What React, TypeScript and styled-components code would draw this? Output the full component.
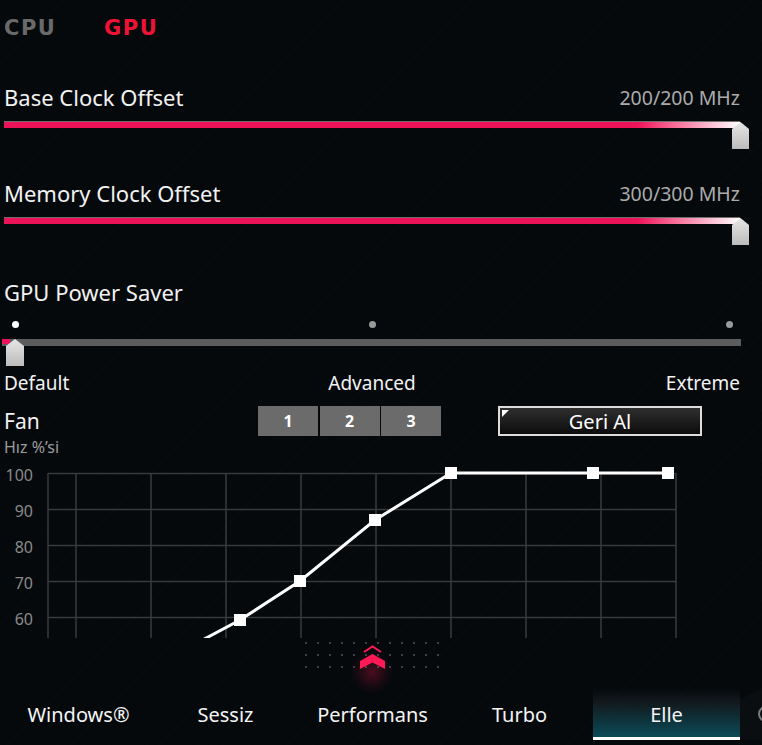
import * as React from 'react'
import styled, { createGlobalStyle } from 'styled-components'

const GlobalStyle = createGlobalStyle`
  html, body {
    margin: 0;
    padding: 0;
    background: #05090c;
  }
  * {
    box-sizing: border-box;
  }
`

const Screen = styled.div`
  width: 762px;
  height: 745px;
  overflow: hidden;
  display: flex;
  flex-direction: column;
  font-family: 'Noto Sans', 'Open Sans', sans-serif;
  color: #f2f2f2;
  background-color: #05090c;
  background-image: repeating-linear-gradient(
    135deg,
    rgba(255, 255, 255, 0.008) 0 1px,
    transparent 1px 9px
  );
`

const Content = styled.div`
  padding: 0 22px 0 4px;
  display: flex;
  flex-direction: column;
`

// Top CPU / GPU switch
const Header = styled.div`
  height: 56px;
  padding-top: 18px;
  display: flex;
`

const HeaderTab = styled.div<{ active?: boolean }>`
  width: 100px;
  font-family: 'DejaVu Sans', 'Liberation Sans', sans-serif;
  font-weight: bold;
  font-size: 21px;
  line-height: 20px;
  letter-spacing: 1.5px;
  color: ${(p) => (p.active ? '#ee1236' : '#6a6a6a')};
`

const LabelRow = styled.div<{ gap?: number }>`
  margin-top: ${(p) => p.gap ?? 0}px;
  height: 30px;
  display: flex;
  align-items: center;
  justify-content: space-between;
`

const Label = styled.span`
  font-size: 22px;
  line-height: 30px;
`

const Value = styled.span`
  font-size: 19.5px;
  color: #ababab;
`

// Clock offset slider
const SliderBox = styled.div`
  position: relative;
  height: 66px;
`

const Track = styled.div`
  margin-top: 10px;
  height: 6px;
  box-shadow: 0 -1px 0 #6e6e6e;
  background: linear-gradient(90deg, #ec135a 0%, #ec135a 86%, #f86a98 91%, #ffffff 100%);
`

const Thumb = styled.div`
  position: absolute;
  width: 17px;
  height: 27px;
  clip-path: polygon(50% 0, 100% 26%, 100% 100%, 0 100%, 0 26%);
  background: linear-gradient(180deg, #e6e6e6, #bcbcbc);
`

const EndThumb = styled(Thumb)`
  top: 10px;
  right: -9px;
`

// Power saver stepped slider
const DotRow = styled.div`
  height: 32px;
  padding: 14px 7.5px 0;
  display: flex;
  justify-content: space-between;
`

const StepDot = styled.div<{ on?: boolean }>`
  width: 7px;
  height: 7px;
  border-radius: 50%;
  background: ${(p) => (p.on ? '#ffffff' : '#9a9a9a')};
`

const StepSlider = styled.div`
  position: relative;
  height: 27px;
  margin: 0 -1px 0 -2px;
`

const StepTrack = styled.div`
  height: 7px;
  background: #5c5c5c;
`

const StepFill = styled.div`
  width: 8px;
  height: 5px;
  background: #ec135a;
`

const StartThumb = styled(Thumb)`
  top: 0;
  left: 4px;
  width: 18px;
`

const TickLabels = styled.div`
  margin-top: 4px;
  height: 26px;
  display: grid;
  grid-template-columns: 1fr auto 1fr;
  align-items: center;
  font-size: 19px;
`

const Tick = styled.span<{ align: 'start' | 'end' }>`
  justify-self: ${(p) => p.align};
`

// Fan controls
const FanRow = styled.div`
  margin-top: 10px;
  height: 30px;
  display: flex;
  align-items: flex-start;
`

const FanTitle = styled.div`
  width: 254px;
  margin-top: 2px;
  font-size: 21px;
  line-height: 26px;
`

const ModeGroup = styled.div`
  display: flex;
  gap: 1.5px;
`

const ModeButton = styled.div`
  width: 60px;
  height: 30px;
  display: flex;
  align-items: center;
  justify-content: center;
  background: #6b6b6b;
  font-weight: bold;
  font-size: 16px;
  color: #ffffff;
`

const ResetButton = styled.div`
  position: relative;
  margin-left: 57px;
  width: 204px;
  height: 30px;
  display: flex;
  align-items: center;
  justify-content: center;
  border: 2px solid #dcdcdc;
  background: linear-gradient(180deg, #2f2f2f 0%, #0c0c0c 100%);
  font-size: 20px;
  color: #ffffff;
  &::before {
    content: '';
    position: absolute;
    top: 2px;
    left: 2px;
    border-top: 7px solid #ffffff;
    border-right: 7px solid transparent;
  }
`

const SubTitle = styled.div`
  height: 21px;
  padding-top: 1px;
  font-size: 16px;
  line-height: 20px;
  color: #9c9c9c;
`

// Fan curve chart
const ChartRow = styled.div`
  height: 181px;
  display: flex;
`

const YAxis = styled.div`
  width: 33px;
  display: flex;
  flex-direction: column;
  align-items: flex-end;
`

const YLabel = styled.span`
  height: 36px;
  line-height: 36px;
  font-size: 16px;
  color: #8a8a8a;
`

const ChartSvg = styled.svg`
  display: block;
  overflow: hidden;
`

// Drawer handle
const Handle = styled.div`
  position: relative;
  width: 744px;
  height: 50px;
  display: flex;
  justify-content: center;
`

const DotGrid = styled.div`
  margin-top: 4px;
  display: grid;
  grid-template-columns: repeat(12, 2px);
  grid-auto-rows: 2px;
  gap: 10px;
`

const GridDot = styled.span`
  width: 2px;
  height: 2px;
  background: #3c4247;
`

const ChevronGlow = styled.div`
  position: absolute;
  left: 350px;
  top: 12px;
  width: 44px;
  height: 44px;
  border-radius: 50%;
  background: radial-gradient(circle, rgba(255, 20, 80, 0.28) 0%, rgba(255, 20, 80, 0.08) 45%, rgba(255, 20, 80, 0) 70%);
`

const ChevronIcon = styled.svg`
  position: absolute;
  left: 358px;
  top: 6px;
`

// Bottom mode tabs
const TabBar = styled.div`
  height: 52px;
  padding-left: 5px;
  display: flex;
`

const ModeTab = styled.div<{ active?: boolean }>`
  width: 147px;
  height: 52px;
  padding-top: 4px;
  display: flex;
  align-items: center;
  justify-content: center;
  font-size: 20px;
  color: #f4f4f4;
  border-bottom: 3px solid ${(p) => (p.active ? '#ffffff' : 'transparent')};
  background: ${(p) =>
    p.active
      ? 'linear-gradient(180deg, rgba(20,30,34,0) 0%, rgba(26,34,38,0.6) 28%, #0b4b58 100%)'
      : 'transparent'};
`

const EdgeCap = styled.div`
  position: relative;
  flex: 1;
  background: #0a0e11;
  clip-path: polygon(0 22%, 100% 0, 100% 100%, 0 100%);
  &::after {
    content: '';
    position: absolute;
    left: 18px;
    top: 18px;
    width: 12px;
    height: 12px;
    border-radius: 50%;
    border: 2px solid #7a7a7a;
  }
`

const yTicks = [100, 90, 80, 70, 60]
const gridRows = [16.5, 52.5, 88.5, 124.5, 160.5]
const gridCols = [15, 43, 118, 193, 268, 343, 418, 493, 568, 643]
const curve: [number, number][] = [
  [132, 203],
  [207, 163],
  [267, 124],
  [342, 63],
  [418, 16],
  [560, 16],
  [635, 16],
]
const modes = ['Windows®', 'Sessiz', 'Performans', 'Turbo', 'Elle']

const FanChart: React.FunctionComponent = () => (
  <ChartRow>
    <YAxis>
      {yTicks.map((t) => (
        <YLabel key={t}>{t}</YLabel>
      ))}
    </YAxis>
    <ChartSvg width={729} height={181} viewBox='0 0 729 181'>
      {gridRows.map((y) => (
        <line key={`r${y}`} x1={15} x2={643} y1={y} y2={y} stroke='#3a3a3a' strokeWidth={1.5} />
      ))}
      {gridCols.map((x) => (
        <line key={`c${x}`} x1={x} x2={x} y1={16} y2={181} stroke='#3a3a3a' strokeWidth={1.5} />
      ))}
      <polyline
        points={curve.map((p) => p.join(',')).join(' ')}
        fill='none'
        stroke='#ffffff'
        strokeWidth={3}
      />
      {curve.slice(1).map(([x, y]) => (
        <rect key={`p${x}`} x={x - 6} y={y - 6} width={12} height={12} fill='#ffffff' />
      ))}
    </ChartSvg>
  </ChartRow>
)

const App: React.FunctionComponent = () => {
  const dots = React.useMemo(() => Array.from({ length: 36 }, (_, i) => i), [])

  return (
    <Screen>
      <GlobalStyle />
      <Content>
        <Header>
          <HeaderTab>CPU</HeaderTab>
          <HeaderTab active>GPU</HeaderTab>
        </Header>

        <LabelRow gap={26}>
          <Label>Base Clock Offset</Label>
          <Value>200/200 MHz</Value>
        </LabelRow>
        <SliderBox>
          <Track />
          <EndThumb />
        </SliderBox>

        <LabelRow>
          <Label>Memory Clock Offset</Label>
          <Value>300/300 MHz</Value>
        </LabelRow>
        <SliderBox>
          <Track />
          <EndThumb />
        </SliderBox>

        <LabelRow gap={3}>
          <Label>GPU Power Saver</Label>
        </LabelRow>
        <DotRow>
          <StepDot on />
          <StepDot />
          <StepDot />
        </DotRow>
        <StepSlider>
          <StepTrack>
            <StepFill />
          </StepTrack>
          <StartThumb />
        </StepSlider>
        <TickLabels>
          <Tick align='start'>Default</Tick>
          <span>Advanced</span>
          <Tick align='end'>Extreme</Tick>
        </TickLabels>

        <FanRow>
          <FanTitle>Fan</FanTitle>
          <ModeGroup>
            <ModeButton>1</ModeButton>
            <ModeButton>2</ModeButton>
            <ModeButton>3</ModeButton>
          </ModeGroup>
          <ResetButton>Geri Al</ResetButton>
        </FanRow>
        <SubTitle>Hız %’si</SubTitle>
      </Content>

      <FanChart />

      <Handle>
        <DotGrid>
          {dots.map((d) => (
            <GridDot key={d} />
          ))}
        </DotGrid>
        <ChevronGlow />
        <ChevronIcon width={29} height={28} viewBox='0 0 29 28'>
          <polyline points='6,8 14.5,2.5 23,8' fill='none' stroke='#ff1a55' strokeWidth={2} />
          <polygon points='2,17 14.5,10 27,17 27,25 14.5,18.5 2,25' fill='#ff1a55' />
        </ChevronIcon>
      </Handle>

      <TabBar>
        {modes.map((m) => (
          <ModeTab key={m} active={m === 'Elle'}>
            {m}
          </ModeTab>
        ))}
        <EdgeCap />
      </TabBar>
    </Screen>
  )
}

export default App
